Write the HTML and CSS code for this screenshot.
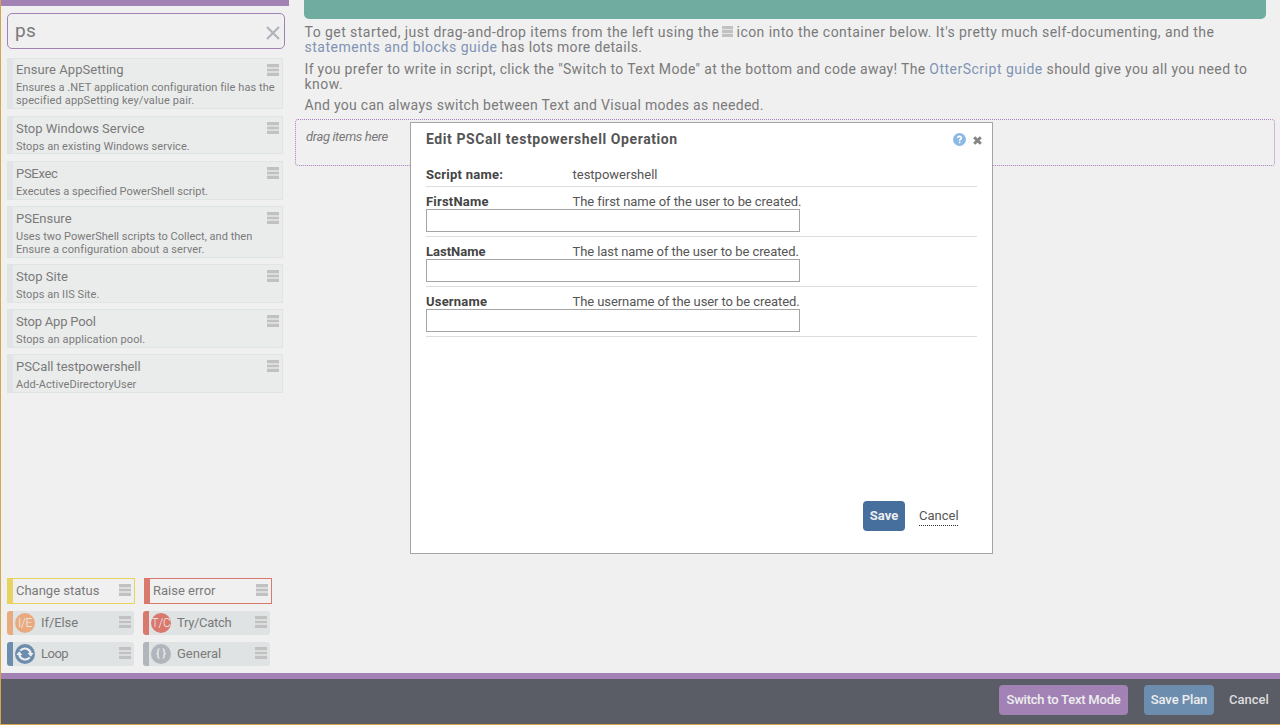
FILE: index.html
```
<!DOCTYPE html>
<html lang="en">
<head>
<meta charset="utf-8">
<title>Plan editor</title>
<link rel="stylesheet" href="styles.css">
</head>
<body>
<div class="workspace">
  <aside class="sidebar">
    <div class="search"><span class="query">ps</span>
      <svg class="clear" viewBox="0 0 14 14"><path d="M1 1L13 13M13 1L1 13"/></svg>
    </div>
    <div class="results">
      <div class="item first"><div class="title t1">Ensure AppSetting</div><div class="desc"><span class="d1">Ensures a .NET application configuration file has the</span><br><span class="d2">specified appSetting key/value pair.</span></div><i class="grip"></i></div>
      <div class="item short"><div class="title">Stop Windows Service</div><div class="desc d3">Stops an existing Windows service.</div><i class="grip"></i></div>
      <div class="item"><div class="title t3">PSExec</div><div class="desc d4">Executes a specified PowerShell script.</div><i class="grip"></i></div>
      <div class="item tall"><div class="title">PSEnsure</div><div class="desc"><span class="d4">Uses two PowerShell scripts to Collect, and then</span><br><span class="d6">Ensure a configuration about a server.</span></div><i class="grip"></i></div>
      <div class="item"><div class="title">Stop Site</div><div class="desc d3">Stops an IIS Site.</div><i class="grip"></i></div>
      <div class="item"><div class="title t6">Stop App Pool</div><div class="desc d6">Stops an application pool.</div><i class="grip"></i></div>
      <div class="item"><div class="title t7">PSCall testpowershell</div><div class="desc d3">Add-ActiveDirectoryUser</div><i class="grip"></i></div>
    </div>
    <div class="blocks">
      <div class="action status"><span>Change status</span><i class="grip"></i></div>
      <div class="action error"><span>Raise error</span><i class="grip"></i></div>
      <div class="block ifelse"><b class="badge">I/E</b><span class="b3">If/Else</span><i class="grip"></i></div>
      <div class="block try"><b class="badge">T/C</b><span class="b4">Try/Catch</span><i class="grip"></i></div>
      <div class="block loop"><svg class="badge" viewBox="0 0 20 20"><path class="arc" d="M5.3 6.6A6 6 0 0 1 15.8 9.5M14.7 13.4A6 6 0 0 1 4.2 10.5"/><path class="tip" d="M12.6 9H18.6L15.8 12.8ZM7.4 11H1.4L4.2 7.2Z"/></svg><span class="b5">Loop</span><i class="grip"></i></div>
      <div class="block general"><b class="badge braces">{ }</b><span>General</span><i class="grip"></i></div>
    </div>
  </aside>
  <main class="main">
    <div class="banner"></div>
    <p><span class="p1">To get started, just drag-and-drop items from the left using the</span><i class="grip inline"></i><span class="p2">icon into the container below. It's pretty much self-documenting, and the</span><br><a>statements and blocks guide</a><span class="p3"> has lots more details.</span></p>
    <p><span class="p4">If you prefer to write in script, click the "Switch to Text Mode" at the bottom and code away! The </span><a>OtterScript guide</a><span class="p5"> should give you all you need to</span><br>know.</p>
    <p class="p6">And you can always switch between Text and Visual modes as needed.</p>
    <div class="dropzone"><em>drag items here</em></div>
  </main>
</div>
<footer class="footer">
  <span class="button switch">Switch to Text Mode</span>
  <span class="button plan">Save Plan</span>
  <span class="leave">Cancel</span>
</footer>
<section class="dialog">
  <header class="dialog-head">
    <h1>Edit PSCall testpowershell Operation</h1>
    <svg class="help" viewBox="0 0 13 13"><circle cx="6.5" cy="6.5" r="6.5"/><path d="M4.7 5.1C4.7 2.8 8.4 2.8 8.4 5C8.4 6.2 6.6 6.2 6.6 7.8"/><rect x="5.8" y="8.7" width="1.6" height="1.5"/></svg>
    <svg class="close" viewBox="0 0 9 9"><path d="M1.2 1.2L7.8 7.8M7.8 1.2L1.2 7.8"/></svg>
  </header>
  <div class="row name"><b class="l1">Script name:</b><span>testpowershell</span></div>
  <div class="row"><b class="l2">FirstName</b><span class="v2">The first name of the user to be created.</span><input type="text"></div>
  <div class="row"><b>LastName</b><span class="v3">The last name of the user to be created.</span><input type="text"></div>
  <div class="row"><b class="l2">Username</b><span class="v3">The username of the user to be created.</span><input type="text"></div>
  <div class="dialog-actions"><span class="save">Save</span><span class="cancel">Cancel</span></div>
</section>
</body>
</html>
```
FILE: styles.css
```
* { box-sizing: border-box; }
body {
  margin: 0; width: 1280px; height: 725px; overflow: hidden; position: relative;
  display: flex; flex-direction: column;
  border-left: 1px solid #d3a650; border-bottom: 1px solid #d3a650;
  background: #f0f0f0; color: #7a7a7a; font: 13px/15px Roboto, sans-serif; white-space: nowrap;
}
.workspace { display: flex; height: 673px; }
.sidebar { width: 288px; border-top: 6px solid #a282b5; padding: 7px 0 7px 6px; display: flex; flex-direction: column; }
.search {
  width: 278px; height: 36px; border: 1px solid #a282b5; border-radius: 5px;
  display: flex; align-items: center; justify-content: space-between; padding: 0 4px 0 7px;
  font-size: 19px; line-height: 34px; letter-spacing: .3px;
}
.clear { width: 14px; height: 14px; margin-top: 3px; stroke: #b0b5bb; stroke-width: 2.2; fill: none; }
.results { display: flex; flex-direction: column; gap: 6px; margin-top: 9px; }
.item {
  width: 276px; height: 39px; display: grid; grid-template-columns: 1fr 12px; align-content: start;
  background: #eaecec; border: 1px solid #dfe4e4; border-left-width: 6px; padding: 4px 3px 0;
}
.item.tall { height: 52px; }
.item.first { height: 51px; margin-bottom: 1px; padding-top: 3px; }
.item.short { height: 38px; margin-bottom: 1px; }
.item .grip { grid-area: 1 / 2; margin-top: 1px; }
.item.first .grip { margin-top: 2px; }
.title { line-height: 15px; }
.t1 { letter-spacing: .06px; }
.t3 { letter-spacing: -.3px; }
.t6 { letter-spacing: -.2px; }
.t7 { letter-spacing: -.07px; }
.desc { grid-column: 1 / 3; font-size: 11px; line-height: 13px; margin-top: 4px; }
.d1 { letter-spacing: .07px; }
.d2 { letter-spacing: .14px; }
.d3 { letter-spacing: .05px; }
.d4 { letter-spacing: .02px; }
.d6 { letter-spacing: .1px; }
.grip {
  display: block; width: 12px; height: 12px;
  background: linear-gradient(#c1c1c1 3px, #dcdddd 3px 5px, #c1c1c1 5px 7px, #dcdddd 7px 9px, #c1c1c1 9px);
}
.blocks { margin-top: auto; display: grid; grid-template-columns: 128px 128px; column-gap: 8px; row-gap: 7px; }
.action { width: 128px; height: 26px; display: flex; justify-content: space-between; padding: 0 3px; border: 1px solid; border-left-width: 6px; }
.action > span, .block > span { color: #7a7a7a; line-height: 24px; }
.action .grip { margin-top: 5px; }
.b3 { letter-spacing: -.08px; }
.b4 { letter-spacing: -.3px; }
.b5 { letter-spacing: -.5px; }
.status { border-color: #e8d360; }
.error { border-color: #d9786c; margin-left: 1px; }
.block { width: 127px; height: 24px; display: flex; align-items: center; border-left: 6px solid; border-radius: 3px; background: #dfe3e3; padding: 0 3px 0 2px; }
.block .grip { margin: -2px 0 0 auto; }
.badge { width: 20px; height: 20px; border-radius: 50%; background: #e9aa80; color: #eee; text-align: center; font: 300 12px/20px Roboto, sans-serif; letter-spacing: -.2px; margin-right: 6px; overflow: hidden; }
.braces { font-size: 11px; line-height: 19px; font-weight: 500; letter-spacing: 0; }
.ifelse { border-color: #e9aa80; }
.try { border-color: #d9786c; }
.try .badge { background: #d9786c; }
.loop { border-color: #6d8dae; }
.loop .badge { background: #6d8dae; }
.general { border-color: #b1b5bc; }
.general .badge { background: #b1b5bc; }
.arc { fill: none; stroke: #efefef; stroke-width: 2; }
.tip { fill: #efefef; }
.main { width: 991px; padding: 0 5px 0 6px; font-size: 14px; letter-spacing: .5px; }
.banner { height: 19px; width: 962px; margin-left: 9px; border-radius: 0 0 5px 5px; background: #70aca0; }
.main p { margin: 0 0 6px 9.5px; line-height: 15px; }
.main .banner + p { margin-top: 6px; margin-bottom: 7px; }
.main a { color: #8093b3; }
.p1 { letter-spacing: .45px; }
.p2 { letter-spacing: .44px; }
.p3 { letter-spacing: .33px; }
.p4 { letter-spacing: .325px; }
.p5 { letter-spacing: .35px; }
.p6 { letter-spacing: .3px; }
.grip.inline { display: inline-block; width: 11px; height: 11px; margin: 0 4px 0 2.5px; background: linear-gradient(#c1c1c1 3px, #e4e4e4 3px 4px, #c1c1c1 4px 7px, #e4e4e4 7px 8px, #c1c1c1 8px); }
.dropzone { height: 47px; width: 980px; border: 1px dotted #a97cc0; border-radius: 3px; padding: 9px 10px; font-size: 13px; letter-spacing: -.37px; }
.footer {
  height: 51px; border-top: 6px solid #a282b5; background: #5a5c66; flex: 1;
  display: flex; justify-content: flex-end; align-items: flex-start; padding: 6px 12px 0 0; color: #dedede; font-weight: 500;
}
.button { height: 30px; line-height: 30px; border-radius: 4px; text-align: center; color: #eee; }
.switch { width: 129px; background: #a282b5; margin-right: 16px; letter-spacing: -.23px; }
.plan { width: 70px; background: #6d8dae; margin-right: 15px; letter-spacing: -.08px; }
.leave { line-height: 30px; width: 39px; }
.dialog { position: absolute; left: 409px; top: 122px; width: 583px; height: 432px; background: #fff; border: 1px solid #a5a5a5; padding: 9px 15px 22px; display: flex; flex-direction: column; color: #555; }
.dialog-head { display: flex; height: 31px; margin-right: -5px; }
.dialog h1 { margin: 0; font-size: 14px; line-height: 15px; font-weight: 700; letter-spacing: .58px; color: #555; flex: 1; }
.help { width: 13px; height: 13px; margin: 1px 7px 0 0; fill: #8bb9e6; }
.help path { fill: none; stroke: #fff; stroke-width: 1.6; }
.help rect { fill: #fff; }
.close { width: 9px; height: 9px; margin-top: 4px; stroke: #858585; stroke-width: 3; }
.row { height: 50px; border-bottom: 1px solid #ddd; display: grid; grid-template-columns: 146.5px 1fr; grid-template-rows: 15px 23px; padding-top: 7px; }
.row.name { height: 24px; padding-top: 4px; }
.row b { color: #444; }
.l1 { letter-spacing: .25px; }
.l2 { letter-spacing: .2px; }
.v2 { letter-spacing: -.06px; }
.v3 { letter-spacing: -.08px; }
.row input { grid-column: 1 / 3; width: 374px; height: 23px; border: 1px solid #a5a5a5; background: #fff; padding: 0; }
.dialog-actions { margin-top: auto; display: flex; justify-content: flex-end; padding-right: 19px; }
.save { width: 42px; height: 30px; background: #466f9e; color: #eee; border-radius: 4px; font-weight: 700; text-align: center; line-height: 30px; margin-right: 14px; }
.cancel { width: 39px; height: 18px; margin-top: 7px; border-bottom: 1px dotted #333; line-height: 16px; }
```
